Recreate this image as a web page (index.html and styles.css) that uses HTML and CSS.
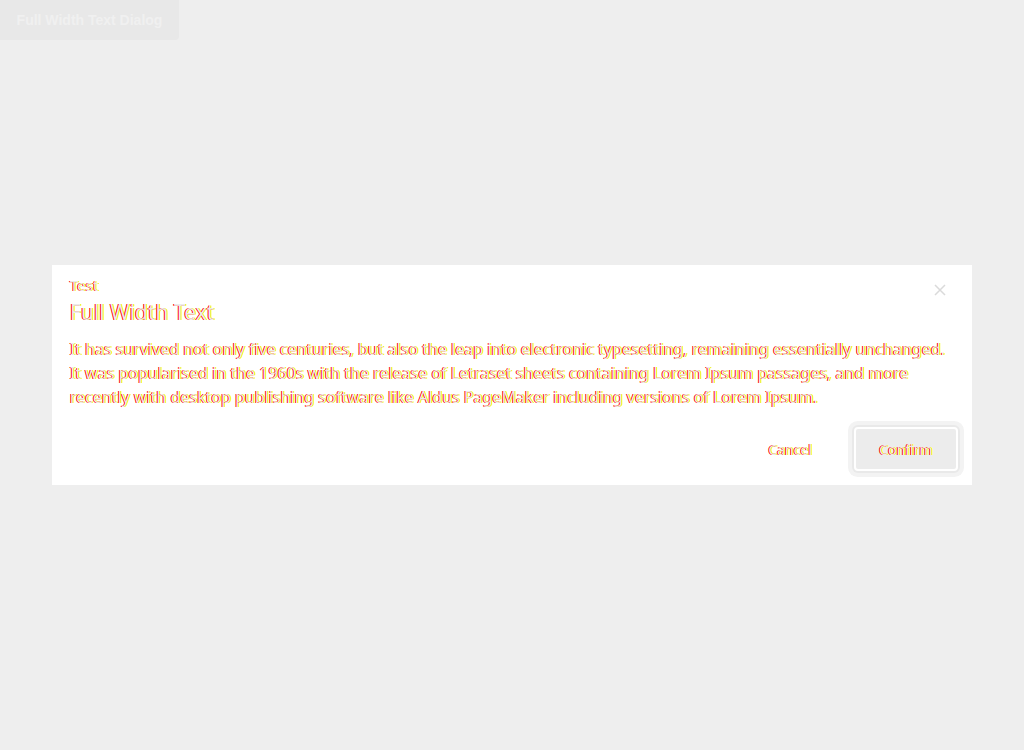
FILE: index.html
```html
<!DOCTYPE html>
<html lang="en">
<head>
<meta charset="utf-8">
<title>Full Width Text Dialog</title>
<link rel="stylesheet" href="styles.css">
</head>
<body>
<div class="page">
  <button class="open-btn" type="button">Full Width Text Dialog</button>
  <div class="overlay">
    <div class="dialog" role="dialog" aria-labelledby="dlg-title">
      <div class="dialog-head">
        <div class="head-text">
          <div class="label">Test</div>
          <h2 class="title" id="dlg-title">Full Width Text</h2>
        </div>
        <button class="close" type="button" aria-label="Close">
          <svg width="12" height="12" viewBox="0 0 12 12"><path d="M1 1L11 11M11 1L1 11" stroke="#dadada" stroke-width="1.5" fill="none"/></svg>
        </button>
      </div>
      <p class="body-text">It has survived not only five centuries, but also the leap into electronic typesetting, remaining essentially unchanged. It was popularised in the 1960s with the release of Letraset sheets containing Lorem Ipsum passages, and more recently with desktop publishing software like Aldus PageMaker including versions of Lorem Ipsum.</p>
      <div class="actions">
        <button class="btn-cancel" type="button">Cancel</button>
        <button class="btn-confirm" type="button">Confirm</button>
      </div>
    </div>
  </div>
</div>
</body>
</html>
```

FILE: styles.css
```css
html, body {
  margin: 0;
  padding: 0;
  background: #eeeeee;
  font-family: "Noto Sans", "Open Sans", "Liberation Sans", Arial, sans-serif;
}
.page {
  width: 1024px;
  height: 750px;
  display: flex;
  flex-direction: column;
}
.open-btn {
  align-self: flex-start;
  height: 40px;
  width: 179px;
  border: none;
  border-radius: 0 0 4px 0;
  background: #e8e8e8;
  color: #f0f0f0;
  font-family: "Liberation Sans", Arial, sans-serif;
  font-weight: bold;
  font-size: 14px;
  padding: 0;
}
.overlay {
  flex: 1;
  display: flex;
  align-items: flex-start;
  justify-content: center;
  padding-top: 225px;
}
.dialog {
  width: 920px;
  box-sizing: border-box;
  background: #ffffff;
  padding: 10px 14px 14px 18px;
  color: #eeeeee;
}
.label,
.title,
.body-text,
.btn-cancel,
.btn-confirm {
  color: #ebebeb;
  text-shadow: -1px 0 0 #ff0000, 1px 0 0 #ffff00;
}
.dialog-head {
  display: flex;
  justify-content: space-between;
  align-items: flex-start;
}
.label {
  font-size: 15px;
  line-height: 20px;
}
.title {
  margin: 3px 0 0;
  font-size: 21px;
  font-weight: normal;
  line-height: 28px;
}
.close {
  background: none;
  border: none;
  padding: 0;
  margin: 9px 12px 0 0;
  width: 12px;
  height: 12px;
  display: flex;
}
.body-text {
  margin: 11px 7px 0 0;
  font-size: 16px;
  line-height: 24px;
}
.actions {
  display: flex;
  justify-content: flex-end;
  align-items: center;
  gap: 42px;
  margin-top: 18px;
}
.btn-cancel {
  background: none;
  border: none;
  font-family: inherit;
  font-size: 14px;
  padding: 0;
}
.btn-confirm {
  width: 104px;
  height: 44px;
  box-sizing: border-box;
  background: #ececec;
  border: 2px solid #ffffff;
  border-radius: 4px;
  box-shadow: 0 0 0 2px #e9e9e9, 0 0 0 6px #f3f3f3;
  font-family: inherit;
  font-size: 14px;
  padding: 0;
}
```
